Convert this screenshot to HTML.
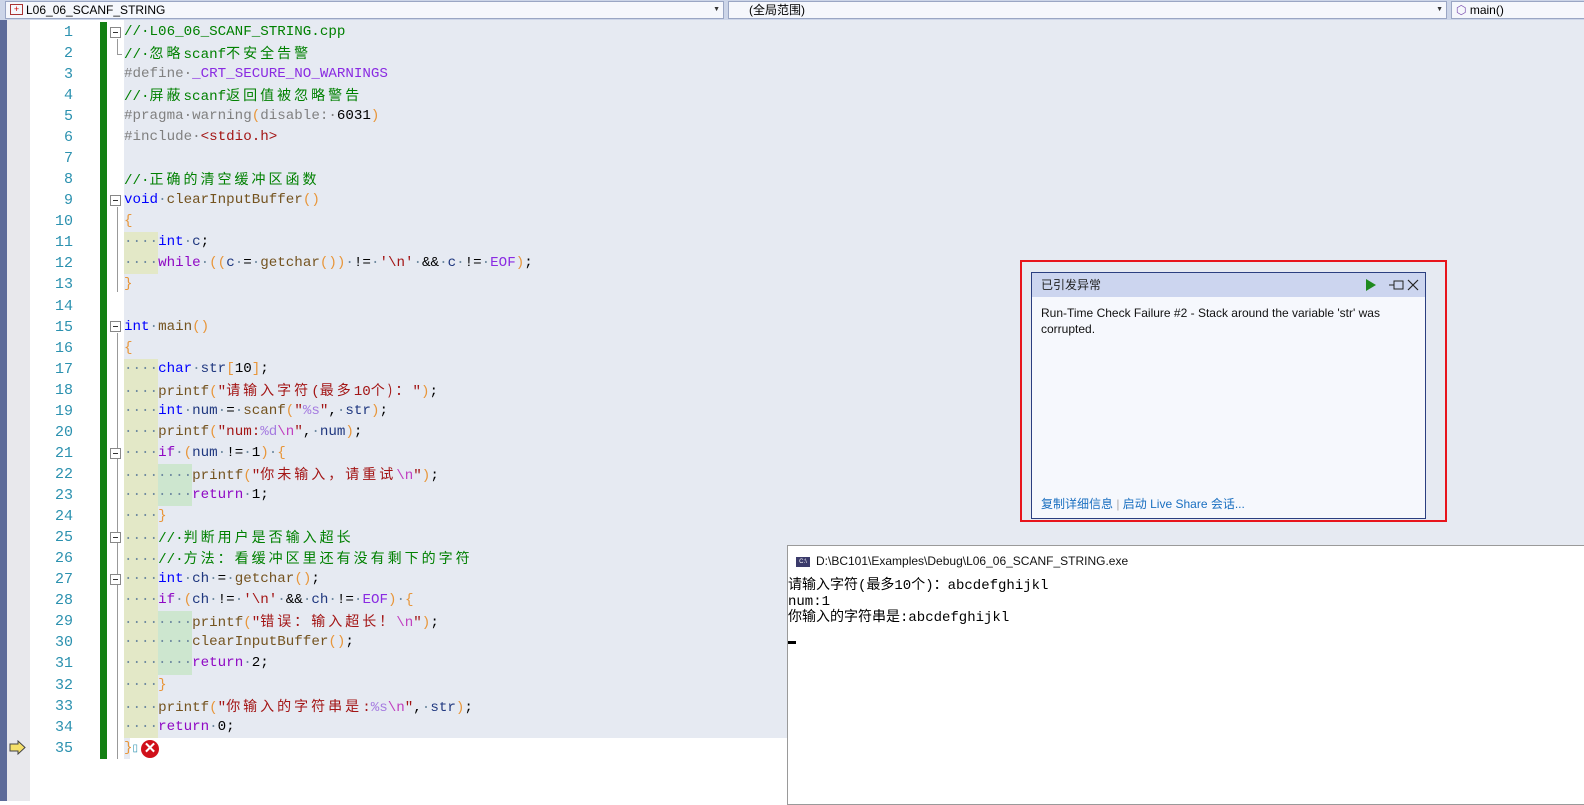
<!DOCTYPE html>
<html><head><meta charset="utf-8"><style>
*{margin:0;padding:0;box-sizing:border-box}
body{width:1584px;height:801px;overflow:hidden;background:#fff;position:relative;font-family:"Liberation Sans","Noto Sans CJK SC",sans-serif}
.abs{position:absolute}
#tb{left:0;top:0;width:1584px;height:20px;background:#ccd5e8}
.dd{position:absolute;top:1px;height:18px;background:#f5f7fc;border:1px solid #9aa6c4;font-size:12px;line-height:16px;color:#000}
.ar{position:absolute;right:3px;top:0;font-size:7px;color:#333}
#codebg{left:124px;top:20px;width:1460px;height:718px;background:#e6eaf2}
#lstrip{left:0;top:20px;width:7px;height:781px;background:#5d6b99}
#gstrip{left:7px;top:20px;width:23px;height:781px;background:#e8e8ec}
#green{left:100px;top:22px;width:7px;height:737px;background:#138013}
.ln{position:absolute;left:30px;width:43px;text-align:right;color:#2b91af;font-family:"Liberation Mono",monospace;font-size:15px;line-height:21px}
.cl{position:absolute;left:124px;white-space:pre;font-family:"Liberation Mono","Noto Sans CJK SC",monospace;font-size:14.2px;line-height:21px;color:#000}
.c{letter-spacing:3px;font-family:"Noto Sans CJK SC",sans-serif;font-size:14px}
.cm{color:#008000}.kw{color:#0000ff}.pp{color:#808080}.mac{color:#8a2be2}.st{color:#a31515}.fn{color:#74531f}.v{color:#1f377f}.ct{color:#8f08c4}.p{color:#e8963a}.b{color:#e8963a}.es{color:#c040c0}.fm{color:#a57be0}.d{color:#6f8aa0}
.i1{position:absolute;left:124px;width:34px;height:21px;background:#e3e8c7}
.i2{position:absolute;left:158px;width:34px;height:21px;background:#cde6cf}
.fold{position:absolute;left:110px;width:11px;height:11px;border:1px solid #888;background:#fff}
.fold:after{content:"";position:absolute;left:2px;top:4px;width:5px;height:1px;background:#333}
.vl{position:absolute;left:117px;width:1px;background:#999}
</style></head><body>
<div id="tb" class="abs">
 <div class="dd" style="left:5px;width:719px"><span style="display:inline-block;width:13px;height:11px;border:1px solid #a33;margin:2px 3px 0 4px;vertical-align:top;font-size:9px;line-height:9px;color:#c00;text-align:center">+</span>L06_06_SCANF_STRING<span class="ar">▼</span></div>
 <div class="dd" style="left:728px;width:719px;padding-left:20px">(全局范围)<span class="ar">▼</span></div>
 <div class="dd" style="left:1451px;width:140px;padding-left:4px"><span style="color:#7a4fb0">⬡</span> main()</div>
</div>
<div id="codebg" class="abs"></div>
<div class="abs" style="left:124px;top:738px;width:6px;height:21px;background:#e6eaf2"></div>
<div id="lstrip" class="abs"></div>
<div id="gstrip" class="abs"></div>
<div id="green" class="abs"></div>

<div class="fold" style="top:27px"></div><div class="vl" style="top:39px;height:15px"></div><div class="abs" style="left:117px;top:54px;width:5px;height:1px;background:#999"></div>
<div class="fold" style="top:195px"></div><div class="vl" style="top:207px;height:85px"></div>
<div class="fold" style="top:321px"></div><div class="vl" style="top:333px;height:426px"></div>
<div class="fold" style="top:448px"></div>
<div class="fold" style="top:532px"></div>
<div class="fold" style="top:574px"></div>

<div class="i1" style="top:232px;height:42px"></div>
<div class="i1" style="top:359px;height:379px"></div>
<div class="i2" style="top:464px;height:42px"></div>
<div class="i2" style="top:611px;height:64px"></div>

<div class="ln" style="top:22px">1</div><div class="ln" style="top:43px">2</div><div class="ln" style="top:64px">3</div><div class="ln" style="top:85px">4</div><div class="ln" style="top:106px">5</div><div class="ln" style="top:127px">6</div><div class="ln" style="top:148px">7</div><div class="ln" style="top:169px">8</div><div class="ln" style="top:190px">9</div><div class="ln" style="top:211px">10</div><div class="ln" style="top:232px">11</div><div class="ln" style="top:253px">12</div><div class="ln" style="top:274px">13</div><div class="ln" style="top:296px">14</div><div class="ln" style="top:317px">15</div><div class="ln" style="top:338px">16</div><div class="ln" style="top:359px">17</div><div class="ln" style="top:380px">18</div><div class="ln" style="top:401px">19</div><div class="ln" style="top:422px">20</div><div class="ln" style="top:443px">21</div><div class="ln" style="top:464px">22</div><div class="ln" style="top:485px">23</div><div class="ln" style="top:506px">24</div><div class="ln" style="top:527px">25</div><div class="ln" style="top:548px">26</div><div class="ln" style="top:569px">27</div><div class="ln" style="top:590px">28</div><div class="ln" style="top:611px">29</div><div class="ln" style="top:632px">30</div><div class="ln" style="top:653px">31</div><div class="ln" style="top:675px">32</div><div class="ln" style="top:696px">33</div><div class="ln" style="top:717px">34</div><div class="ln" style="top:738px">35</div>

<div class="cl" style="top:22px"><span class="cm">//·L06_06_SCANF_STRING.cpp</span></div>
<div class="cl" style="top:43px"><span class="cm">//·<span class="c">忽略</span>scanf<span class="c">不安全告警</span></span></div>
<div class="cl" style="top:64px"><span class="pp">#define·</span><span class="mac">_CRT_SECURE_NO_WARNINGS</span></div>
<div class="cl" style="top:85px"><span class="cm">//·<span class="c">屏蔽</span>scanf<span class="c">返回值被忽略警告</span></span></div>
<div class="cl" style="top:106px"><span class="pp">#pragma·warning</span><span class="p">(</span><span class="pp">disable:·</span>6031<span class="p">)</span></div>
<div class="cl" style="top:127px"><span class="pp">#include·</span><span class="st">&lt;stdio.h&gt;</span></div>
<div class="cl" style="top:169px"><span class="cm">//·<span class="c">正确的清空缓冲区函数</span></span></div>
<div class="cl" style="top:190px"><span class="kw">void</span><span class="d">·</span><span class="fn">clearInputBuffer</span><span class="p">()</span></div>
<div class="cl" style="top:211px"><span class="b">{</span></div>
<div class="cl" style="top:232px"><span class="d">····</span><span class="kw">int</span><span class="d">·</span><span class="v">c</span>;</div>
<div class="cl" style="top:253px"><span class="d">····</span><span class="ct">while</span><span class="d">·</span><span class="p">((</span><span class="v">c</span><span class="d">·</span>=<span class="d">·</span><span class="fn">getchar</span><span class="p">())</span><span class="d">·</span>!=<span class="d">·</span><span class="st">'\n'</span><span class="d">·</span>&amp;&amp;<span class="d">·</span><span class="v">c</span><span class="d">·</span>!=<span class="d">·</span><span class="mac">EOF</span><span class="p">)</span>;</div>
<div class="cl" style="top:274px"><span class="b">}</span></div>
<div class="cl" style="top:317px"><span class="kw">int</span><span class="d">·</span><span class="fn">main</span><span class="p">()</span></div>
<div class="cl" style="top:338px"><span class="b">{</span></div>
<div class="cl" style="top:359px"><span class="d">····</span><span class="kw">char</span><span class="d">·</span><span class="v">str</span><span class="p">[</span>10<span class="p">]</span>;</div>
<div class="cl" style="top:380px"><span class="d">····</span><span class="fn">printf</span><span class="p">(</span><span class="st">"<span class="c">请输入字符</span>(<span class="c">最多</span>10<span class="c">个)：</span>"</span><span class="p">)</span>;</div>
<div class="cl" style="top:401px"><span class="d">····</span><span class="kw">int</span><span class="d">·</span><span class="v">num</span><span class="d">·</span>=<span class="d">·</span><span class="fn">scanf</span><span class="p">(</span><span class="st">"<span class="fm">%s</span>"</span>,<span class="d">·</span><span class="v">str</span><span class="p">)</span>;</div>
<div class="cl" style="top:422px"><span class="d">····</span><span class="fn">printf</span><span class="p">(</span><span class="st">"num:<span class="fm">%d</span><span class="es">\n</span>"</span>,<span class="d">·</span><span class="v">num</span><span class="p">)</span>;</div>
<div class="cl" style="top:443px"><span class="d">····</span><span class="ct">if</span><span class="d">·</span><span class="p">(</span><span class="v">num</span><span class="d">·</span>!=<span class="d">·</span>1<span class="p">)</span><span class="d">·</span><span class="b">{</span></div>
<div class="cl" style="top:464px"><span class="d">········</span><span class="fn">printf</span><span class="p">(</span><span class="st">"<span class="c">你未输入，请重试</span><span class="es">\n</span>"</span><span class="p">)</span>;</div>
<div class="cl" style="top:485px"><span class="d">········</span><span class="ct">return</span><span class="d">·</span>1;</div>
<div class="cl" style="top:506px"><span class="d">····</span><span class="b">}</span></div>
<div class="cl" style="top:527px"><span class="d">····</span><span class="cm">//·<span class="c">判断用户是否输入超长</span></span></div>
<div class="cl" style="top:548px"><span class="d">····</span><span class="cm">//·<span class="c">方法：看缓冲区里还有没有剩下的字符</span></span></div>
<div class="cl" style="top:569px"><span class="d">····</span><span class="kw">int</span><span class="d">·</span><span class="v">ch</span><span class="d">·</span>=<span class="d">·</span><span class="fn">getchar</span><span class="p">()</span>;</div>
<div class="cl" style="top:590px"><span class="d">····</span><span class="ct">if</span><span class="d">·</span><span class="p">(</span><span class="v">ch</span><span class="d">·</span>!=<span class="d">·</span><span class="st">'\n'</span><span class="d">·</span>&amp;&amp;<span class="d">·</span><span class="v">ch</span><span class="d">·</span>!=<span class="d">·</span><span class="mac">EOF</span><span class="p">)</span><span class="d">·</span><span class="b">{</span></div>
<div class="cl" style="top:611px"><span class="d">········</span><span class="fn">printf</span><span class="p">(</span><span class="st">"<span class="c">错误：输入超长！</span><span class="es">\n</span>"</span><span class="p">)</span>;</div>
<div class="cl" style="top:632px"><span class="d">········</span><span class="fn">clearInputBuffer</span><span class="p">()</span>;</div>
<div class="cl" style="top:653px"><span class="d">········</span><span class="ct">return</span><span class="d">·</span>2;</div>
<div class="cl" style="top:675px"><span class="d">····</span><span class="b">}</span></div>
<div class="cl" style="top:696px"><span class="d">····</span><span class="fn">printf</span><span class="p">(</span><span class="st">"<span class="c">你输入的字符串是</span>:<span class="fm">%s</span><span class="es">\n</span>"</span>,<span class="d">·</span><span class="v">str</span><span class="p">)</span>;</div>
<div class="cl" style="top:717px"><span class="d">····</span><span class="ct">return</span><span class="d">·</span>0;</div>
<div class="cl" style="top:738px"><span class="b">}</span><span style="color:#2b91af;font-size:10px">▯</span></div>
<div class="abs" style="left:141px;top:740px;width:18px;height:18px;border-radius:50%;background:#d0101a;color:#fff;font-size:15px;line-height:18px;text-align:center;font-weight:bold">✕</div>
<svg class="abs" style="left:9px;top:740px" width="18" height="15"><path d="M1 4h8V1l7 6.5-7 6.5v-3H1z" fill="#f5e06a" stroke="#444" stroke-width="1"/></svg>

<div class="abs" style="left:1020px;top:260px;width:427px;height:262px;border:2px solid #e8141c"></div>
<div class="abs" style="left:1031px;top:272px;width:395px;height:247px;border:1px solid #2b3f80;background:#f6f8fd">
 <div style="height:24px;background:#ccd5ef;font-size:12px;line-height:24px;padding-left:9px;color:#222">已引发异常
  <svg style="position:absolute;right:6px;top:5px" width="56" height="14"><path d="M3 1l10 6-10 6z" fill="#1e8a1e"/><path d="M26 7h5M31 3h9v8h-9z" stroke="#222" fill="none"/><path d="M45 2l10 10M55 2l-10 10" stroke="#222" stroke-width="1.2"/></svg>
 </div>
 <div style="padding:8px 9px;font-size:12px;line-height:16px;color:#111">Run-Time Check Failure #2 - Stack around the variable 'str' was corrupted.</div>
 <div style="position:absolute;left:9px;top:222px;font-size:12px;color:#1a6fc0">复制详细信息 <span style="color:#aaa">|</span> 启动 Live Share 会话...</div>
</div>

<div class="abs" style="left:787px;top:545px;width:800px;height:260px;background:#fff;border:1px solid #9a9a9a;border-right:none">
 <div style="height:30px;font-size:12px;line-height:30px;padding-left:8px;color:#111"><span style="display:inline-block;width:14px;height:10px;background:#3b3b6b;color:#fff;font-size:6px;line-height:10px;text-align:center;vertical-align:middle;margin-right:6px">C:\</span>D:\BC101\Examples\Debug\L06_06_SCANF_STRING.exe</div>
 <div style="font-family:'Liberation Mono','Noto Sans CJK SC',monospace;font-size:14px;line-height:16px;white-space:pre;color:#000;margin-top:2px">请输入字符(最多10个)：abcdefghijkl
num:1
你输入的字符串是:abcdefghijkl</div>
 <div style="margin-top:15px;width:8px;height:3px;background:#000"></div>
</div>
</body></html>
